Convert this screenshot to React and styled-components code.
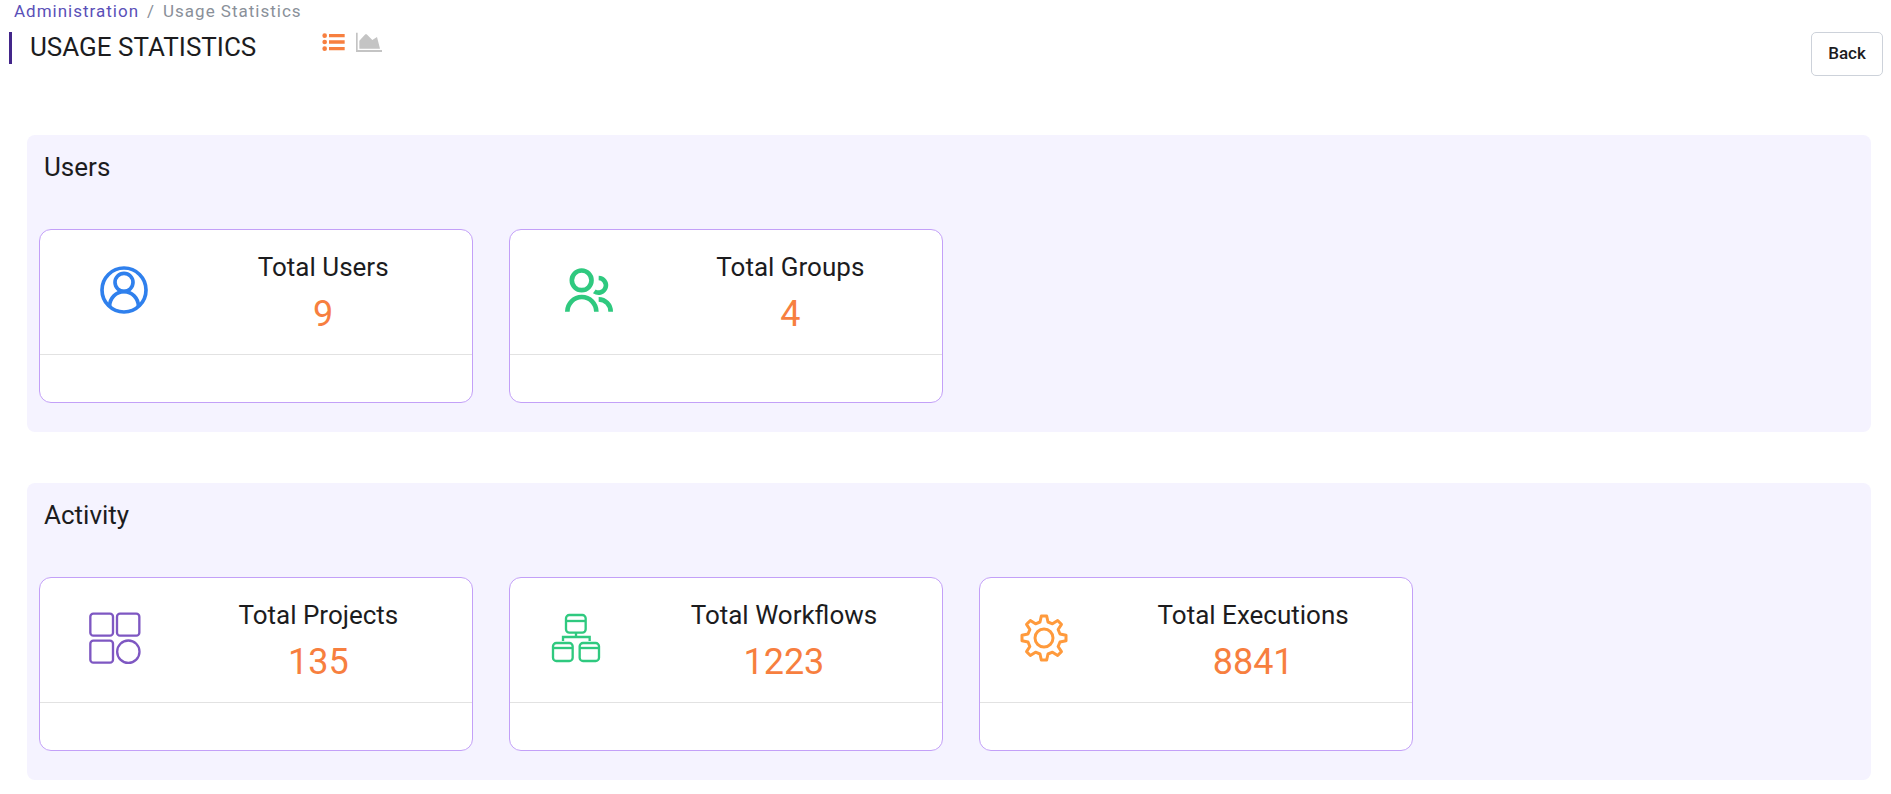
import React from "react";
import styled, { createGlobalStyle } from "styled-components";

const GlobalStyle = createGlobalStyle`
  *, *::before, *::after { box-sizing: border-box; }
  body {
    margin: 0;
    background: #ffffff;
    color: #1c1c1e;
    font-family: Roboto, "Liberation Sans", sans-serif;
  }
  h1, h2, h3, p { margin: 0; font-weight: 400; }
  button { padding: 0; font: inherit; color: inherit; cursor: pointer; }
`;

const Page = styled.div`
  padding-bottom: 12px;
`;

const Breadcrumb = styled.nav`
  display: flex;
  gap: 8px;
  padding: 0 14px;
  font-size: 17px;
  line-height: 22px;
  letter-spacing: 1px;
  color: #8a9099;
`;

const BreadcrumbLink = styled.a`
  color: #5a50b8;
  text-decoration: none;
`;

const Header = styled.header`
  display: flex;
  align-items: flex-start;
  padding: 10px 8px 0 9px;
`;

const PageTitle = styled.h1`
  padding: 0 0 2px 18px;
  border-left: 3px solid #43268a;
  font-size: 26px;
  line-height: 30px;
`;

const ViewSwitch = styled.div`
  display: flex;
  gap: 10px;
  margin-left: 66px;
`;

const ViewButton = styled.button`
  display: flex;
  height: 20px;
  border: 0;
  background: none;
  color: ${({ $active }) => ($active ? "#f77f3f" : "#c4c4c4")};
`;

const BackButton = styled.button`
  width: 72px;
  height: 44px;
  margin-left: auto;
  padding-bottom: 2px;
  border: 1px solid #cdd2da;
  border-radius: 5px;
  background: #ffffff;
  font-size: 17px;
  font-weight: 500;
`;

const Sections = styled.main`
  display: flex;
  flex-direction: column;
  gap: 51px;
  margin: 59px 20px 0 27px;
`;

const Panel = styled.section`
  padding: 16px 12px 29px;
  border-radius: 8px;
  background: #f5f3ff;
`;

const PanelTitle = styled.h2`
  padding-left: 5px;
  font-size: 26px;
  line-height: 32px;
`;

const CardGrid = styled.div`
  display: grid;
  grid-template-columns: repeat(auto-fill, 434px);
  gap: 36px;
  margin-top: 46px;
`;

const Card = styled.article`
  border: 1px solid #c3a0f8;
  border-radius: 12px;
  background: #ffffff;
`;

const CardBody = styled.div`
  display: flex;
  justify-content: space-evenly;
  align-items: center;
  height: 124px;
  padding-top: 2px;
`;

const CardFooter = styled.footer`
  height: 48px;
  border-top: 1px solid #e2e2e2;
`;

const IconBox = styled.div`
  display: flex;
  justify-content: center;
  width: 100px;
  padding-bottom: 6px;
  color: ${({ $color }) => $color};
`;

const Metric = styled.div`
  padding: 0 49px;
  text-align: center;
`;

const MetricLabel = styled.h3`
  font-size: 26px;
  line-height: 30px;
  white-space: nowrap;
`;

const MetricValue = styled.p`
  margin-top: 11px;
  font-size: 36px;
  line-height: 42px;
  color: #f77f3f;
`;

function CardIcon({ strokeWidth, children }) {
  return (
    <svg
      width="52"
      height="52"
      viewBox="0 0 156 156"
      fill="none"
      stroke="currentColor"
      strokeWidth={strokeWidth}
      aria-hidden="true"
    >
      {children}
    </svg>
  );
}

const UserIcon = () => (
  <CardIcon strokeWidth={11}>
    <circle cx="78" cy="78" r="66" />
    <circle cx="78" cy="55" r="27" />
    <path d="M35 128 V126 A43 43 0 0 1 121 126 V128" />
  </CardIcon>
);

const GroupIcon = () => (
  <CardIcon strokeWidth={14}>
    <circle cx="56" cy="49" r="29.5" />
    <path d="M13 143 A43.5 44 0 0 1 100 143" />
    <path d="M107 42 A22 22 0 1 1 94 82" />
    <path d="M107 106 A36 37 0 0 1 143 143" />
  </CardIcon>
);

const ProjectsIcon = () => (
  <CardIcon strokeWidth={7}>
    <rect x="4" y="5" width="68" height="66" rx="9" />
    <rect x="84" y="5" width="67" height="66" rx="9" />
    <rect x="4" y="86" width="68" height="66" rx="9" />
    <circle cx="118" cy="119" r="33.5" />
  </CardIcon>
);

const WorkflowIcon = () => (
  <CardIcon strokeWidth={7}>
    <rect x="48" y="9" width="59" height="53" rx="10" />
    <path d="M48 27 H107" />
    <path d="M78 62 V75 M39 87 V75 H119 V87" />
    <rect x="9" y="93" width="59" height="54" rx="10" />
    <path d="M9 108 H68" />
    <rect x="89" y="93" width="58" height="54" rx="10" />
    <path d="M89 108 H147" />
  </CardIcon>
);

const TOOTH = [[-12, -48], [-8, -66], [8, -66], [12, -48]];

const gearPoints = Array.from({ length: 8 }, (_, i) => {
  const a = (i * Math.PI) / 4;
  return TOOTH.map(
    ([x, y]) =>
      `${(78 + x * Math.cos(a) - y * Math.sin(a)).toFixed(2)},${(78 + x * Math.sin(a) + y * Math.cos(a)).toFixed(2)}`
  ).join(" ");
}).join(" ");

const GearIcon = () => (
  <CardIcon strokeWidth={9}>
    <polygon points={gearPoints} strokeLinejoin="round" />
    <circle cx="78" cy="78" r="27" />
  </CardIcon>
);

const ListIcon = () => (
  <svg width="24" height="20" viewBox="0 0 72 60" fill="currentColor" aria-hidden="true">
    <circle cx="8" cy="11" r="7" />
    <circle cx="8" cy="30" r="7" />
    <circle cx="8" cy="50" r="7" />
    <path d="M21 6 H68 V16 H21Z M21 25 H68 V35 H21Z M21 45 H68 V55 H21Z" />
  </svg>
);

const AreaChartIcon = () => (
  <svg width="26" height="20" viewBox="0 0 78 60" fill="currentColor" aria-hidden="true">
    <path d="M0 2 H5 V54 H78 V60 H0Z" />
    <path d="M10 50 V26 L28 7 H32 L49 24 L63 15 L72 50Z" />
  </svg>
);

const SECTIONS = [
  {
    title: "Users",
    cards: [
      { label: "Total Users", value: 9, color: "#2f80ed", Icon: UserIcon },
      { label: "Total Groups", value: 4, color: "#2fc97f", Icon: GroupIcon },
    ],
  },
  {
    title: "Activity",
    cards: [
      { label: "Total Projects", value: 135, color: "#7e57c2", Icon: ProjectsIcon },
      { label: "Total Workflows", value: 1223, color: "#2fc97f", Icon: WorkflowIcon },
      { label: "Total Executions", value: 8841, color: "#ff9a3c", Icon: GearIcon },
    ],
  },
];

function StatCard({ label, value, color, Icon }) {
  return (
    <Card>
      <CardBody>
        <IconBox $color={color}>
          <Icon />
        </IconBox>
        <Metric>
          <MetricLabel>{label}</MetricLabel>
          <MetricValue>{value}</MetricValue>
        </Metric>
      </CardBody>
      <CardFooter />
    </Card>
  );
}

export default function App() {
  return (
    <Page>
      <GlobalStyle />
      <Breadcrumb aria-label="Breadcrumb">
        <BreadcrumbLink href="#administration">Administration</BreadcrumbLink>
        <span>/</span>
        <span>Usage Statistics</span>
      </Breadcrumb>
      <Header>
        <PageTitle>USAGE STATISTICS</PageTitle>
        <ViewSwitch>
          <ViewButton type="button" $active aria-label="List view">
            <ListIcon />
          </ViewButton>
          <ViewButton type="button" aria-label="Chart view">
            <AreaChartIcon />
          </ViewButton>
        </ViewSwitch>
        <BackButton type="button">Back</BackButton>
      </Header>
      <Sections>
        {SECTIONS.map(({ title, cards }) => (
          <Panel key={title}>
            <PanelTitle>{title}</PanelTitle>
            <CardGrid>
              {cards.map((card) => (
                <StatCard key={card.label} {...card} />
              ))}
            </CardGrid>
          </Panel>
        ))}
      </Sections>
    </Page>
  );
}
